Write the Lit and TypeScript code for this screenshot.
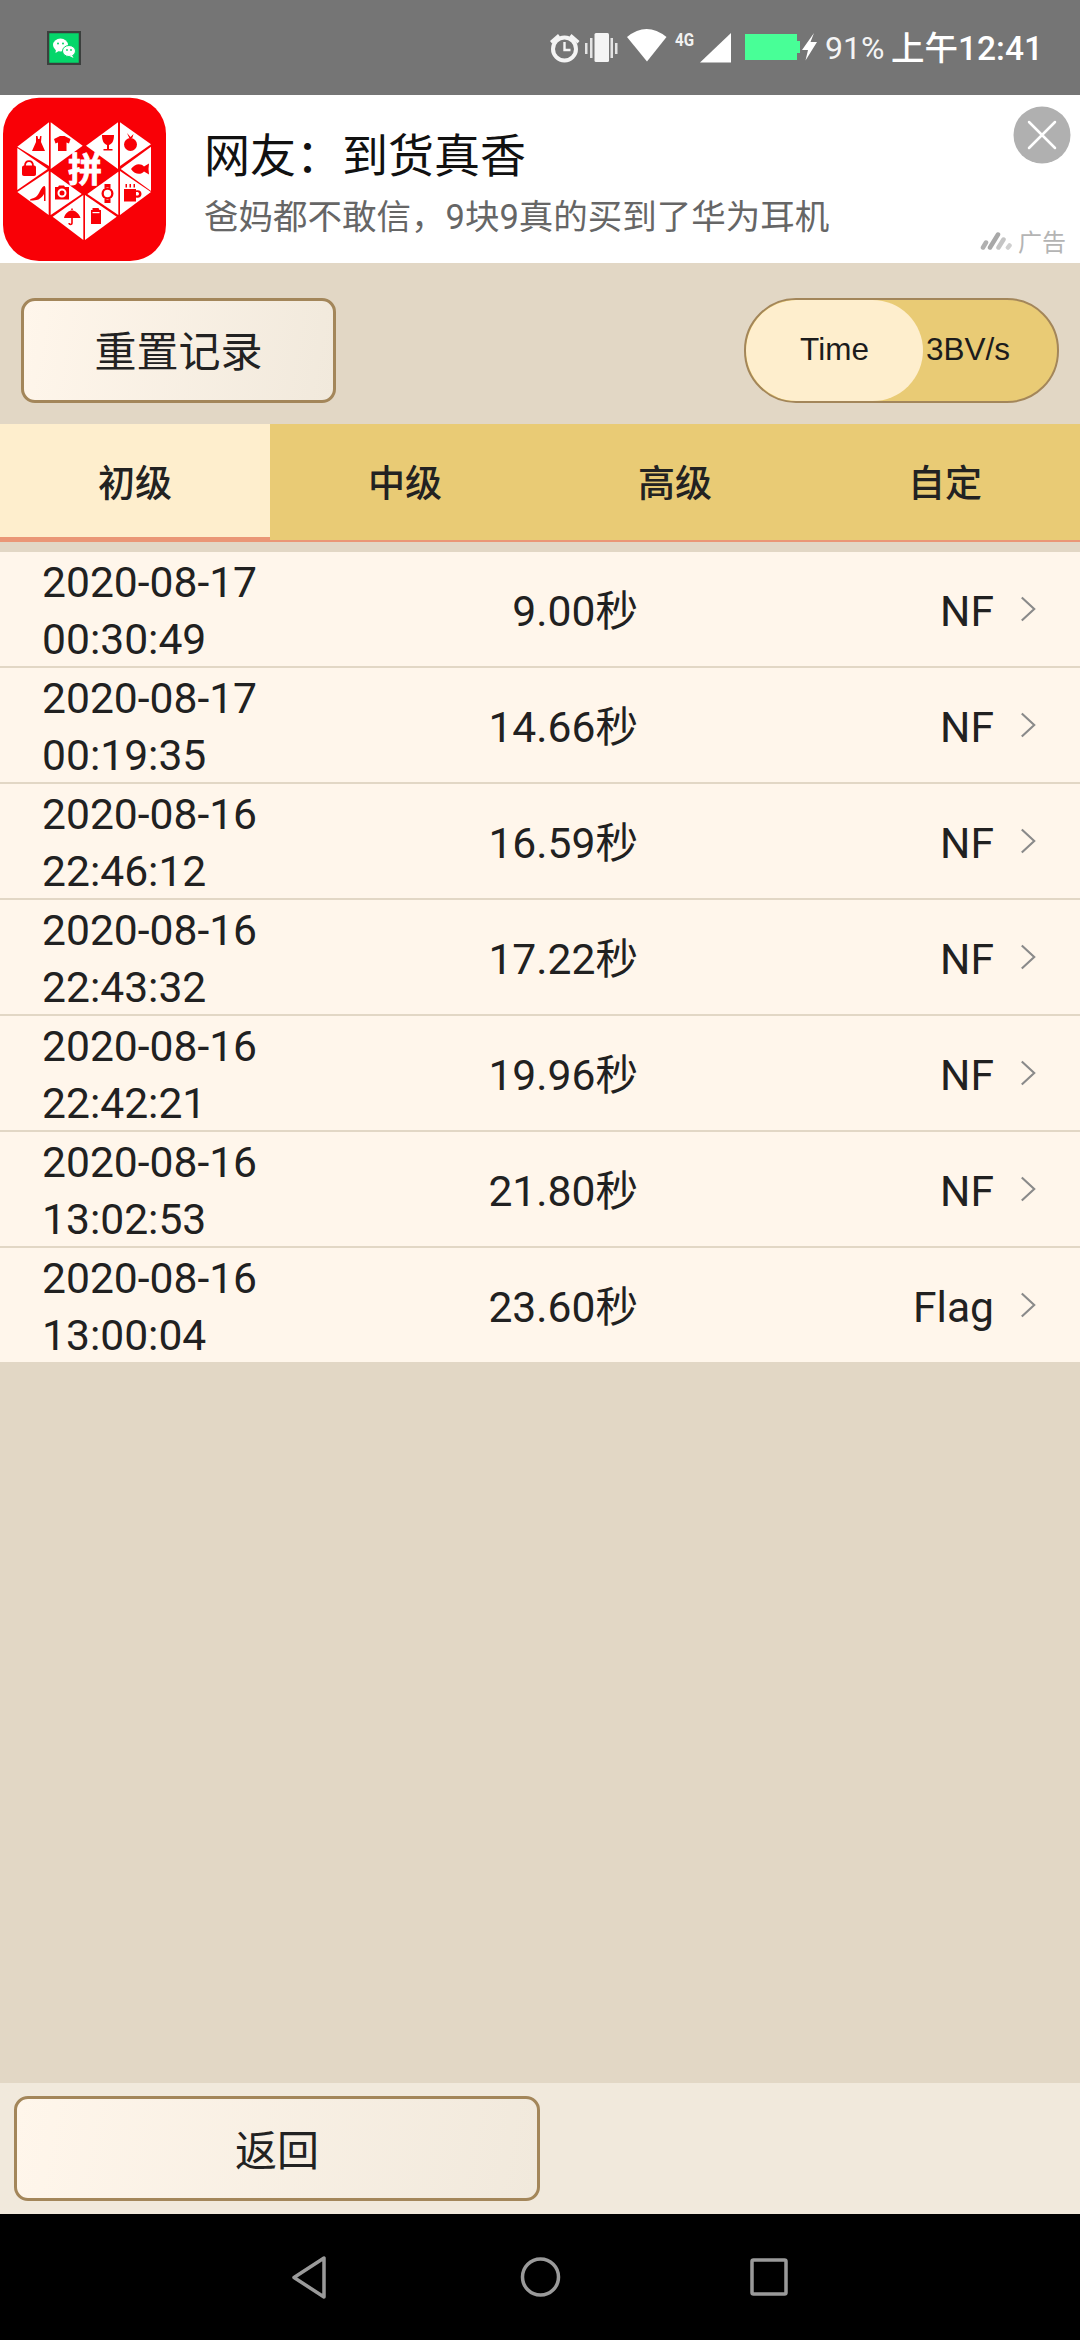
import { LitElement, html, css, svg } from "lit";
import { customElement } from "lit/decorators.js";

const rows = [
  ["2020-08-17", "00:30:49", "9.00秒", "NF"],
  ["2020-08-17", "00:19:35", "14.66秒", "NF"],
  ["2020-08-16", "22:46:12", "16.59秒", "NF"],
  ["2020-08-16", "22:43:32", "17.22秒", "NF"],
  ["2020-08-16", "22:42:21", "19.96秒", "NF"],
  ["2020-08-16", "13:02:53", "21.80秒", "NF"],
  ["2020-08-16", "13:00:04", "23.60秒", "Flag"],
];
const tabs = ["初级", "中级", "高级", "自定"];
const adTitle = "网友\uFF1A到货真香";
const adSub = "爸妈都不敢信\uFF0C9块9真的买到了华为耳机";

const tri = [
  "17.3,56.7 49,32.3 49,76",
  "50.7,32.3 82.7,55.7 50.7,79",
  "86,55.7 118,32.3 118,79",
  "120,32.3 151,54.3 120,76",
  "17.3,58 47.7,79 17.3,100",
  "151,56.7 151,101 120.7,79",
  "17.3,102 48.7,81 48.7,125",
  "50.7,81.7 81.7,104 50.7,125",
  "87.3,104 118.3,81.7 118.3,125",
  "120,81 151,102 120,125",
  "52.7,126.7 83.3,105 83.3,150",
  "85,105 116.7,126.7 85,150",
];

@customElement("app-root")
export class AppRoot extends LitElement {
  static styles = css`
    :host { display: block; width: 1080px; height: 2340px; overflow: hidden; font-family: Roboto, "Noto Sans CJK SC", sans-serif; color: #212121; background: #e2d7c5; }
    .page { display: flex; flex-direction: column; height: 2340px; }
    .status { height: 95px; flex: none; background: #757575; display: flex; align-items: center; padding: 0 0 0 47px; color: #fff; box-sizing: border-box; }
    .wechat { width: 34px; height: 34px; display: block; margin-top: 1px; }
    .st-right { margin-left: auto; display: flex; align-items: center; height: 95px; padding-right: 37px; }
    .st-icons { display: block; width: 280px; height: 95px; }
    .pct { font-size: 32px; width: 66px; line-height: 95px; white-space: nowrap; padding-top: 2px; color: #f4f4f4; }
    .clock { font-size: 33.5px; font-weight: 500; line-height: 95px; white-space: nowrap; padding-top: 2px; }
    .ad { height: 168px; flex: none; background: #fff; display: flex; position: relative; box-sizing: border-box; }
    .logo { width: 180px; height: 168px; flex: none; display: block; }
    .logo-text { font: 700 34px "Noto Sans CJK SC", sans-serif; fill: #fff; stroke: #fff; stroke-width: 0.8px; }
    .ad-text { margin-left: 24px; padding-top: 27px; }
    .ad-title { font: 400 46px/60px "Noto Sans CJK SC", sans-serif; color: #111; }
    .ad-sub { font: 400 34.5px/46px Roboto, "Noto Sans CJK SC", sans-serif; color: #666; margin-top: 12px; white-space: nowrap; }
    .close { position: absolute; left: 1013px; top: 11px; width: 58px; height: 58px; }
    .ad-tag { position: absolute; left: 980px; top: 130px; display: flex; align-items: center; color: #b4b4b4; font: 400 24px/32px "Noto Sans CJK SC", sans-serif; gap: 6px; }
    .ad-tag svg { width: 32px; height: 18px; display: block; }
    .tools { height: 161px; flex: none; box-sizing: border-box; padding: 35px 21px 21px 21px; display: flex; justify-content: space-between; }
    .reset { width: 315px; height: 105px; box-sizing: border-box; border: 3px solid #a3865a; border-radius: 14px; background: linear-gradient(100deg, #fff6eb, #f1e9dc); display: flex; align-items: center; justify-content: center; padding-bottom: 4px; font: 400 42px "Noto Sans CJK SC", sans-serif; color: #222; }
    .switch { width: 315px; height: 105px; box-sizing: border-box; border: 2px solid #a3865a; border-radius: 52px; background: #e9cb75; display: flex; overflow: hidden; font: 400 31.5px "Liberation Sans", Arial, sans-serif; color: #1c1c1c; }
    .knob { width: 177px; flex: none; background: #feeecd; border-radius: 52px; display: flex; align-items: center; justify-content: center; padding-bottom: 3px; box-sizing: border-box; }
    .other { padding-left: 3px; display: flex; align-items: center; padding-bottom: 3px; }
    .tabs { height: 118px; flex: none; display: grid; grid-template-columns: repeat(4, 1fr); background: #e9cb75; border-bottom: 2px solid #ea9676; box-sizing: border-box; }
    .tab { display: flex; align-items: center; justify-content: center; font: 500 37px "Noto Sans CJK SC", sans-serif; color: #222; padding-bottom: 2px; }
    .tab.on { background: #feeecd; box-shadow: inset 0 -3px 0 #ea9676; }
    .list { margin-top: 10px; flex: none; }
    .row { height: 116px; box-sizing: border-box; background: #fff6eb; border-bottom: 2px solid #e2d7c5; padding-left: 42px; display: grid; grid-template-columns: 250px 346px 356px auto; align-items: center; font-size: 42.6px; line-height: 57px; color: #212121; }
    .row:last-child { height: 114px; border-bottom: 0; }
    .date { white-space: nowrap; align-self: start; margin-top: 2px; }
    .num { text-align: right; white-space: nowrap; padding-top: 2px; }
    .res { text-align: right; padding-top: 2px; }
    .chev { width: 16px; height: 28px; margin: -2px 0 0 26px; display: block; }
    .spacer { flex: 1; }
    .bottom { height: 131px; flex: none; background: #f1e9dc; padding: 13px 0 0 14px; box-sizing: border-box; }
    .back { width: 526px; height: 105px; box-sizing: border-box; border: 3px solid #a3865a; border-radius: 14px; background: linear-gradient(100deg, #fff6eb, #f1e9dc); display: flex; align-items: center; justify-content: center; padding-bottom: 2px; font: 400 42px "Noto Sans CJK SC", sans-serif; color: #222; }
    .nav { height: 126px; flex: none; background: #000; }
    .nav svg { display: block; width: 1080px; height: 126px; }
  `;

  private statusIcons() {
    return html`<svg class="st-icons" viewBox="545 0 280 95" fill="#fff">
      <circle cx="564.500" cy="49" r="11.500" fill="none" stroke="#f4f4f4" stroke-width="4"/>
      <path d="M564.500 42v8h6" fill="none" stroke="#f4f4f4" stroke-width="2.400"/>
      <path d="M550 41l8-7 2 2.500-8 7zM579.500 41l-8-7-2 2.500 8 7z" fill="#f4f4f4"/>
      <rect x="594.500" y="33" width="14.500" height="29" rx="1.500" fill="#f4f4f4"/>
      <rect x="585" y="43" width="2.500" height="11" fill="#e4e4e4"/>
      <rect x="590" y="38" width="2.500" height="20" fill="#e4e4e4"/>
      <rect x="610.500" y="38" width="2.500" height="20" fill="#e4e4e4"/>
      <rect x="615" y="43" width="2.500" height="11" fill="#e4e4e4"/>
      <path d="M627 37Q646.500 21 666.500 37L647 61.500Z"/>
      <text x="675" y="46" font-family="Roboto, sans-serif" font-size="18" font-weight="700" fill="#f2f2f2" textLength="19" lengthAdjust="spacingAndGlyphs">4G</text>
      <path d="M731 33V62.500H700Z"/>
      <rect x="745" y="34" width="52" height="26" fill="#48ff97"/>
      <rect x="797" y="41" width="3" height="12" fill="#48ff97"/>
      <path d="M814 33l-12 17h6l-2.500 10.500L817 42h-6.500z"/>
    </svg>`;
  }

  private logo() {
    return html`<svg class="logo" viewBox="0 0 180 168">
      <rect x="3" y="2.700" width="163" height="163.300" rx="36" fill="#f90006"/>
      <g transform="translate(0 -5)">
        ${tri.map((p) => svg`<polygon points=${p} fill="#fff"/>`)}
        <text class="logo-text" x="85" y="92" text-anchor="middle">拼</text>
        <g fill="#f90006">
          <path d="M36 46h1.500l.7 3h1.300l.7-3h1.300l-.5 6 4 9H32l4-9z"/>
          <path d="M54 49l6-3h4.500l6 3-1.500 4.500-2.500-1v8.500h-8.500v-8.500l-2.500 1z"/>
          <path d="M102 45h12c0 6-2 9-5 10v4h3.500v1.500h-9V59h3.500v-4c-3-1-5-4-5-10z"/>
          <circle cx="130.500" cy="54.500" r="6.500"/><path d="M127 43l3.500 4 3-3-1 3.500-2 1.500-1-.5z"/>
          <path d="M24 75.500h10c1.500 0 2 1 2 2v6.500c0 1-.7 2-2 2H24c-1.300 0-2-1-2-2v-6.500c0-1 .7-2 2-2z"/>
          <path d="M25 76c0-6.500 8-6.500 8 0" fill="none" stroke="#f90006" stroke-width="1.800"/>
          <path d="M131 79c4-6 10-6 13-2.500l5-3-.5 5.500.5 5.500-5-3c-3 3.500-9 3.500-13-2.500z"/>
          <path d="M31 109c3-1 6-2 8-6 1.500-3 3-6 5-7 1-.5 1.500 1 1.500 3v12H44v-7c-1 2-3 4-5.500 5.500-3 .7-4 1-8 1-1 0-1-1 .5-1.500z"/>
          <path fill-rule="evenodd" d="M55 97h3l1-1.500h5l1 1.500h4v12.500H55zM62 98.500a4.500 4.500 0 100 9 4.500 4.500 0 000-9zM62 100.500a2.500 2.500 0 110 5 2.500 2.500 0 010-5z"/>
          <path fill-rule="evenodd" d="M104.500 94h6v4h-6zM104.500 109h6v4h-6zM107.500 97.500a6 6 0 100 12 6 6 0 000-12zM107.500 99.800a3.700 3.700 0 110 7.400 3.700 3.700 0 010-7.400z"/>
          <path fill-rule="evenodd" d="M124 99h12v1.500c3.500-1 5.500 1 5.500 3.500s-2.500 4.500-5.500 3.500v4h-12zM136 102v3.500c1.800.3 3-.3 3-1.800s-1.200-2-3-1.700z"/>
          <rect x="125.500" y="94" width="1.500" height="3.500"/><rect x="129.500" y="94" width="1.500" height="3.500"/><rect x="133.500" y="94" width="1.500" height="3.500"/>
          <path d="M64 128c1-5 5-7.500 8-7.500s7 2.500 8.500 7.500zM71.200 120v-1.500h1.600v1.500zM71.200 128h1.600v5c0 3-4.500 3-4.500 0h1.500c0 1 1.400 1 1.400 0z"/>
          <path d="M92.500 118h6l1 2h1.500v14H91v-14h1.500z"/>
        </g>
        <rect x="92.500" y="122" width="7" height="1.200" fill="#fff"/>
      </g>
    </svg>`;
  }

  render() {
    return html`<div class="page">
      <div class="status">
        <svg class="wechat" viewBox="0 0 34 34">
          <rect x="1" y="1" width="32" height="32" fill="#05d66a" stroke="#3b3f3d" stroke-width="2.500"/>
          <ellipse cx="13.500" cy="14" rx="7.500" ry="6.500" fill="#fff"/>
          <path d="M9 18l-.5 4 4-2.500z" fill="#fff"/>
          <ellipse cx="22" cy="20" rx="6.500" ry="5.500" fill="#fff" stroke="#05d66a"/>
          <path d="M25 24l1.500 3-4-2z" fill="#fff"/>
          <circle cx="11" cy="12.500" r="1" fill="#05d66a"/><circle cx="16" cy="12.500" r="1" fill="#05d66a"/>
          <circle cx="20" cy="19" r=".9" fill="#05d66a"/><circle cx="24" cy="19" r=".9" fill="#05d66a"/>
        </svg>
        <div class="st-right">
          ${this.statusIcons()}
          <span class="pct">91%</span>
          <span class="clock">上午12:41</span>
        </div>
      </div>

      <div class="ad">
        ${this.logo()}
        <div class="ad-text">
          <div class="ad-title">${adTitle}</div>
          <div class="ad-sub">${adSub}</div>
        </div>
        <svg class="close" viewBox="0 0 58 58">
          <circle cx="29" cy="29" r="28.500" fill="#b0b0b0"/>
          <path d="M16 16l26 26M42 16L16 42" stroke="#fff" stroke-width="2.500" stroke-linecap="round"/>
        </svg>
        <div class="ad-tag">
          <svg viewBox="0 0 32 18">
            <g stroke-width="4.500" stroke-linecap="round" fill="none">
              <path d="M3 15.500l3-5" stroke="#b0b0b0"/><path d="M10 15.500l8-13" stroke="#a8a8a8"/><path d="M18.500 15.500l5-8" stroke="#c4c4c4"/><path d="M28 15.500l1.500-2" stroke="#cfcfcf"/>
            </g>
          </svg>
          <span>广告</span>
        </div>
      </div>

      <div class="tools">
        <div class="reset">重置记录</div>
        <div class="switch"><div class="knob">Time</div><div class="other">3BV/s</div></div>
      </div>

      <div class="tabs">
        ${tabs.map((t, i) => html`<div class="tab ${i === 0 ? "on" : ""}">${t}</div>`)}
      </div>

      <div class="list">
        ${rows.map((r) => html`<div class="row">
          <div class="date">${r[0]}<br />${r[1]}</div>
          <div class="num">${r[2]}</div>
          <div class="res">${r[3]}</div>
          <svg class="chev" viewBox="0 0 18 30"><path d="M2 2l14 13L2 28" fill="none" stroke="#8a8a8a" stroke-width="2.400"/></svg>
        </div>`)}
      </div>

      <div class="spacer"></div>

      <div class="bottom"><div class="back">返回</div></div>

      <div class="nav">
        <svg viewBox="0 0 1080 126" fill="none" stroke="#9a9a9a" stroke-width="3.500" stroke-linejoin="round">
          <path d="M324 44v39L294 63.500z"/>
          <circle cx="540.500" cy="63" r="18"/>
          <rect x="752" y="46" width="34" height="34" rx="1.500"/>
        </svg>
      </div>
    </div>`;
  }
}
